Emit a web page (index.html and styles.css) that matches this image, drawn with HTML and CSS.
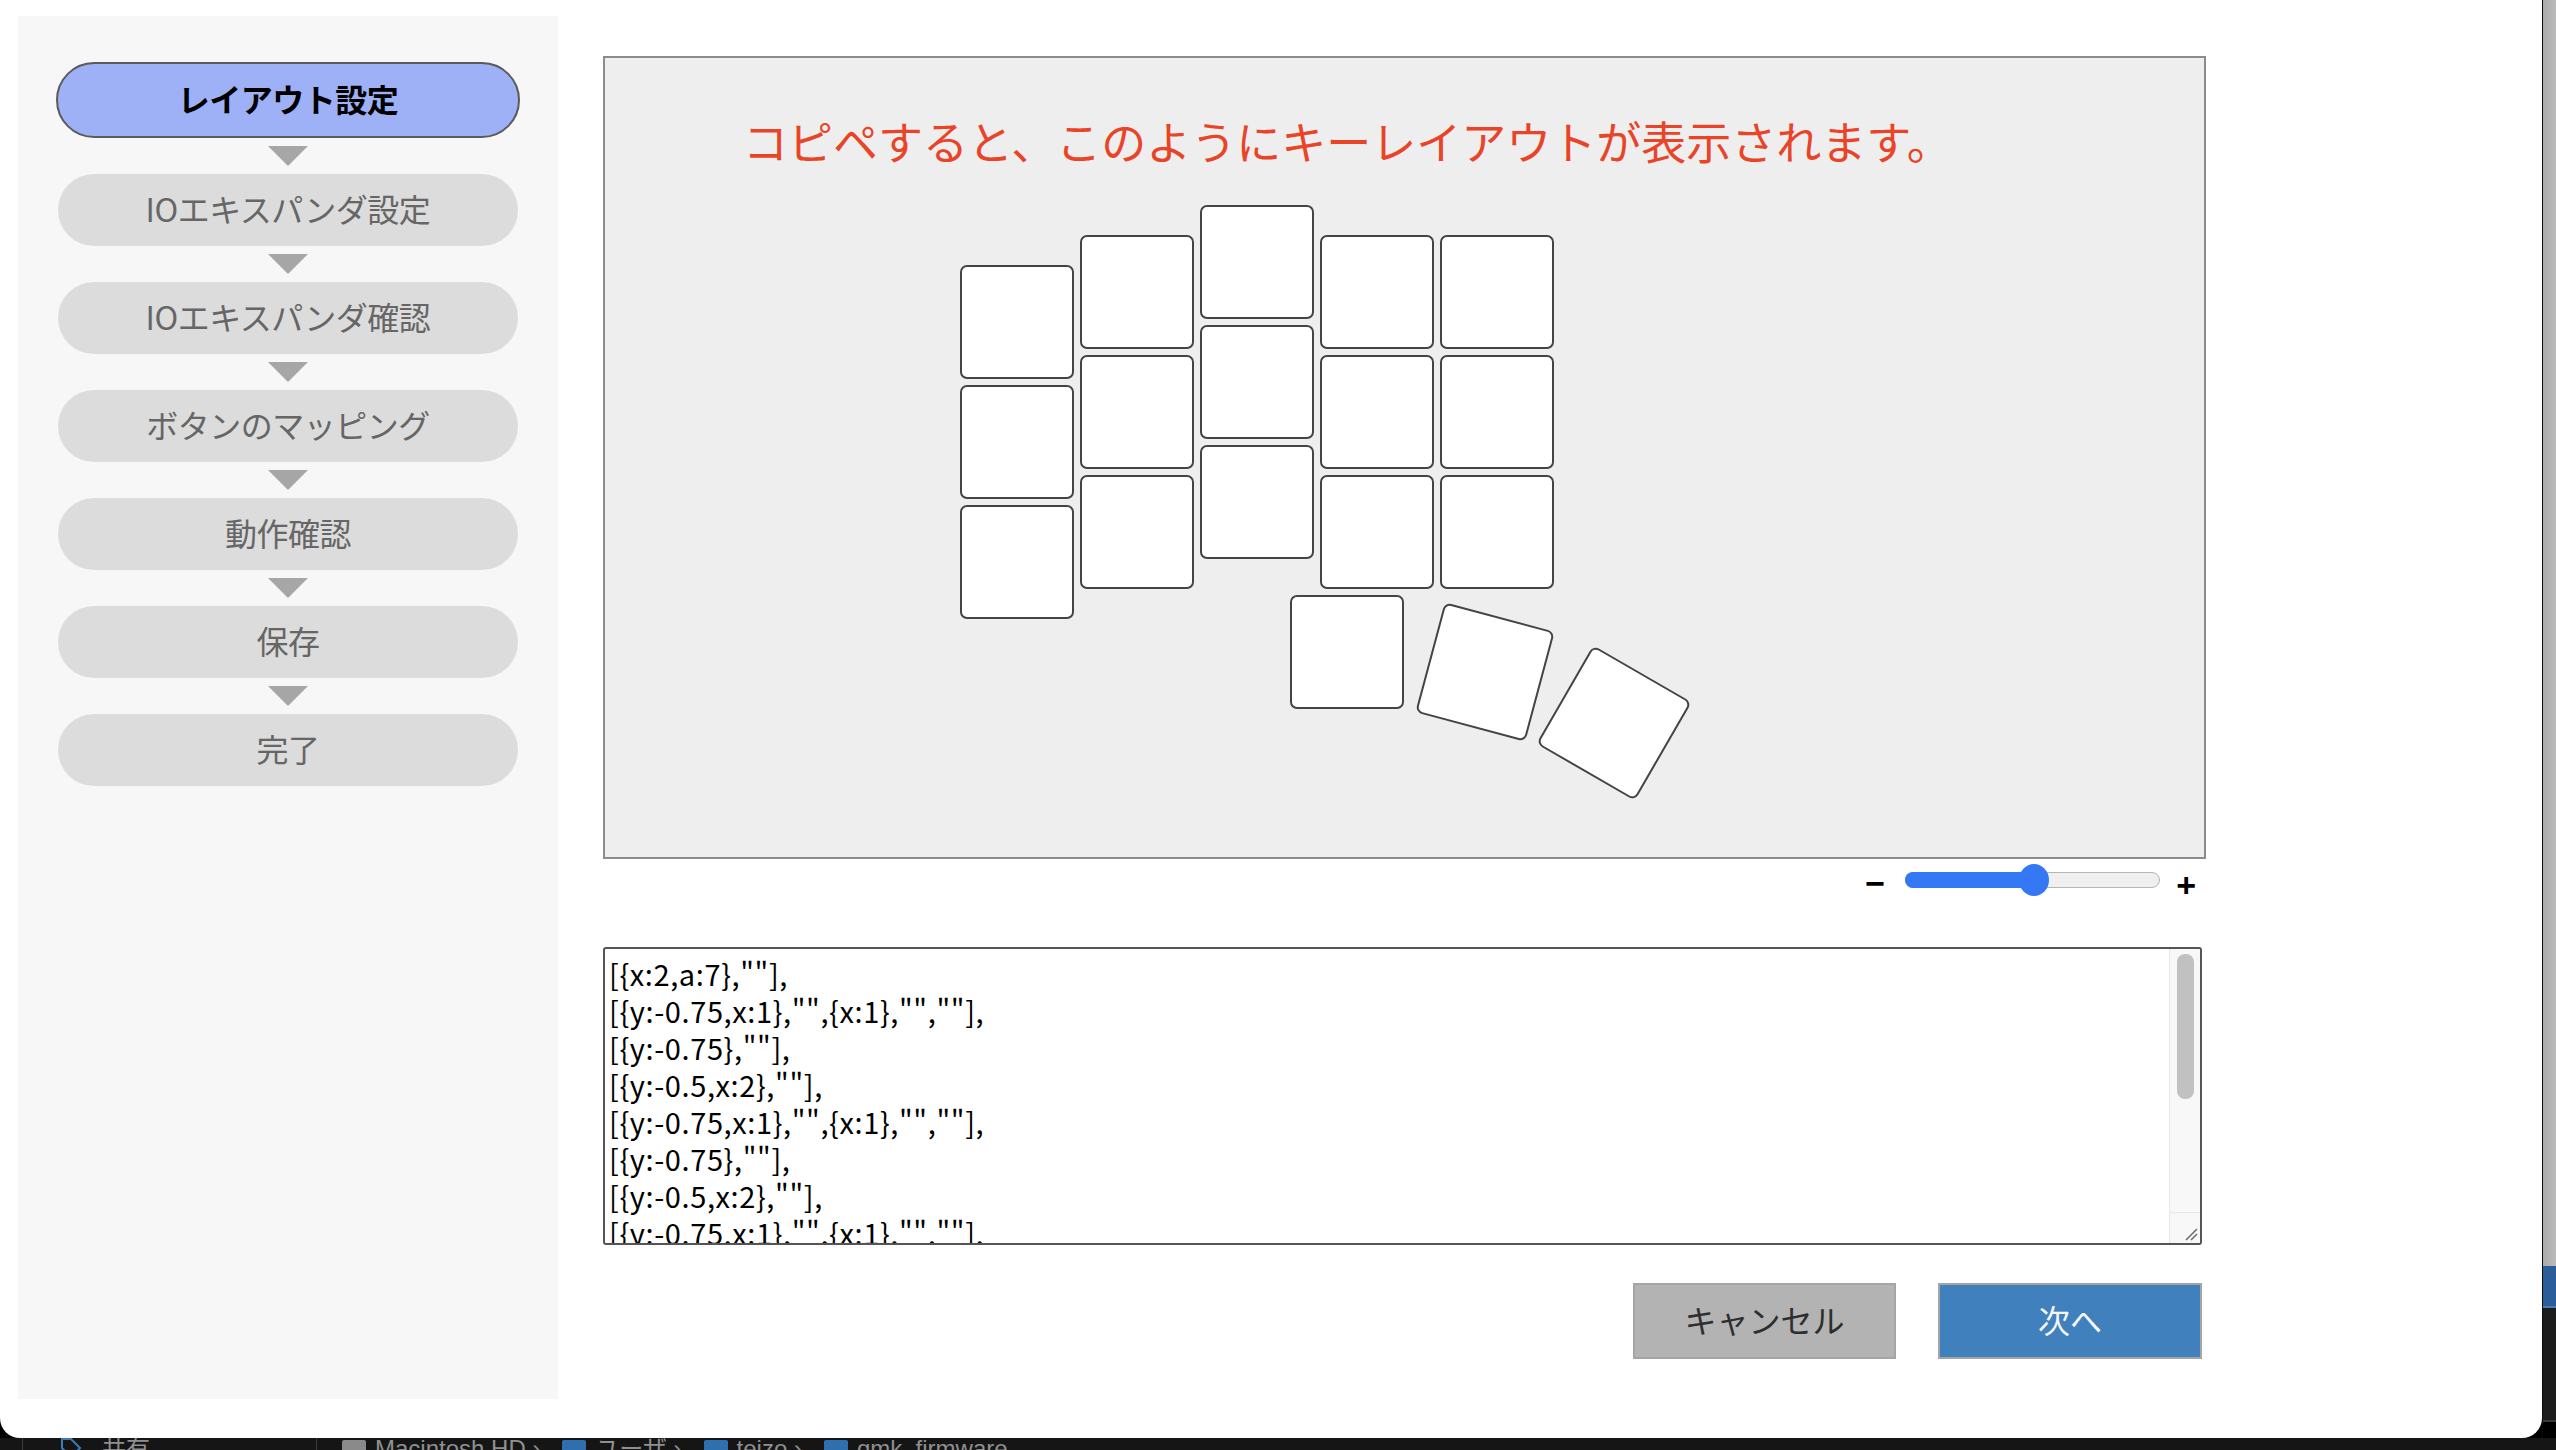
FILE: index.html
```html
<!DOCTYPE html>
<html lang="ja">
<head>
<meta charset="utf-8">
<title>レイアウト設定</title>
<link rel="stylesheet" href="styles.css">
</head>
<body>
<div class="desktop">
  <div class="top-row">
    <div class="window">
      <aside class="sidebar">
        <ol class="steps">
          <li class="step active">レイアウト設定</li>
          <li class="arrow"></li>
          <li class="step">IOエキスパンダ設定</li>
          <li class="arrow"></li>
          <li class="step">IOエキスパンダ確認</li>
          <li class="arrow"></li>
          <li class="step">ボタンのマッピング</li>
          <li class="arrow"></li>
          <li class="step">動作確認</li>
          <li class="arrow"></li>
          <li class="step">保存</li>
          <li class="arrow"></li>
          <li class="step">完了</li>
        </ol>
      </aside>
      <main class="main">
        <div class="preview">
          <p class="caption">コピペすると、このようにキーレイアウトが表示されます。</p>
          <div class="keyboard">
            <div class="key" style="left:0px;top:60px"></div>
            <div class="key" style="left:0px;top:180px"></div>
            <div class="key" style="left:0px;top:300px"></div>
            <div class="key" style="left:120px;top:30px"></div>
            <div class="key" style="left:120px;top:150px"></div>
            <div class="key" style="left:120px;top:270px"></div>
            <div class="key" style="left:240px;top:0px"></div>
            <div class="key" style="left:240px;top:120px"></div>
            <div class="key" style="left:240px;top:240px"></div>
            <div class="key" style="left:360px;top:30px"></div>
            <div class="key" style="left:360px;top:150px"></div>
            <div class="key" style="left:360px;top:270px"></div>
            <div class="key" style="left:480px;top:30px"></div>
            <div class="key" style="left:480px;top:150px"></div>
            <div class="key" style="left:480px;top:270px"></div>
            <div class="key" style="left:330px;top:390px"></div>
            <div class="key" style="left:468px;top:410px;transform:rotate(15deg)"></div>
            <div class="key" style="left:597px;top:461px;transform:rotate(30deg)"></div>
          </div>
        </div>
        <div class="zoom">
          <span class="zoom-minus">−</span>
          <div class="range">
            <div class="range-fill" style="width:128px"></div>
            <div class="range-thumb" style="left:113px"></div>
          </div>
          <span class="zoom-plus">+</span>
        </div>
        <div class="code">
<pre class="code-text">[{x:2,a:7},""],
[{y:-0.75,x:1},"",{x:1},"",""],
[{y:-0.75},""],
[{y:-0.5,x:2},""],
[{y:-0.75,x:1},"",{x:1},"",""],
[{y:-0.75},""],
[{y:-0.5,x:2},""],
[{y:-0.75,x:1},"",{x:1},"",""],
[{y:-0.75},""],
[{y:-0.25,x:2.75},""],
[{r:15,rx:3.75,ry:3.25,y:-0.1,x:0.15},""],
[{r:30,rx:4.75,ry:3.5,y:-0.05,x:0.2},""]</pre>
          <div class="scrollbar">
            <div class="sb-track"><div class="sb-thumb"></div></div>
            <div class="sb-corner">
              <svg class="grip" width="14" height="14" viewBox="0 0 14 14"><path d="M13 2 L2 13 M13 7 L7 13" stroke="#6a6a6a" stroke-width="1.5" fill="none"/></svg>
            </div>
          </div>
        </div>
        <div class="actions">
          <button class="btn cancel">キャンセル</button>
          <button class="btn next">次へ</button>
        </div>
      </main>
    </div>
    <div class="edge">
      <div class="edge-gray"></div>
      <div class="edge-blue"></div>
      <div class="edge-dark"></div>
    </div>
  </div>
  <div class="pathbar">
    <div class="pb-gap"></div>
    <div class="pb-sep"></div>
    <div class="pb-tags">
      <svg class="pb-tag" width="22" height="22" viewBox="0 0 22 22"><path d="M2 2 H11 L20 11 L11 20 L2 11 Z" fill="none" stroke="#3d7ab8" stroke-width="2"/></svg>
      <span>共有</span>
    </div>
    <div class="pb-sep"></div>
    <div class="pb-path">
      <span class="pb-icon gray"></span><span class="pb-crumb">Macintosh HD ›</span>
      <span class="pb-icon"></span><span class="pb-crumb">ユーザ ›</span>
      <span class="pb-icon"></span><span class="pb-crumb">teizo ›</span>
      <span class="pb-icon"></span><span class="pb-crumb">qmk_firmware</span>
    </div>
  </div>
</div>
</body>
</html>
```
FILE: styles.css
```css
* {
  box-sizing: border-box;
  margin: 0;
  padding: 0;
}

html,
body {
  width: 2556px;
  height: 1450px;
  overflow: hidden;
  background: #000;
}

body {
  font-family: "Noto Sans CJK JP", "Noto Sans", sans-serif;
}

.desktop {
  display: flex;
  flex-direction: column;
  width: 2556px;
  height: 1450px;
}

.top-row {
  display: flex;
  height: 1438px;
  flex: none;
}

.window {
  width: 2542px;
  height: 1438px;
  flex: none;
  background: #fff;
  border-radius: 0 0 20px 20px;
  display: flex;
  gap: 45px;
  padding: 16px 0 39px 18px;
}

/* ---------- sidebar ---------- */
.sidebar {
  width: 540px;
  flex: none;
  background: #f7f7f7;
  padding-top: 46px;
}

.steps {
  list-style: none;
  display: flex;
  flex-direction: column;
  align-items: center;
  gap: 8px;
}

.step {
  width: 460px;
  height: 72px;
  border-radius: 36px;
  background: #dcdcdc;
  color: #666;
  font-size: 32px;
  display: flex;
  align-items: center;
  justify-content: center;
  letter-spacing: -0.5px;
  padding-bottom: 5px;
}

.step.active {
  width: 464px;
  height: 76px;
  border-radius: 38px;
  border: 2px solid #5a5a5a;
  background: #9eb0f6;
  color: #000;
  font-weight: 700;
}

.arrow {
  width: 0;
  height: 0;
  border-left: 20px solid transparent;
  border-right: 20px solid transparent;
  border-top: 20px solid #a6a6a6;
}

/* ---------- main ---------- */
.main {
  width: 1603px;
  flex: none;
  padding-top: 40px;
  display: flex;
  flex-direction: column;
}

.preview {
  height: 803px;
  background: #eeeeee;
  border: 2px solid #8c8c8c;
  overflow: hidden;
}

.caption {
  font-size: 45px;
  line-height: 44px;
  color: #e94428;
  margin: 61px 0 0 138px;
  white-space: nowrap;
}

.keyboard {
  position: relative;
  width: 800px;
  height: 620px;
  margin: 42px 0 0 355px;
}

.key {
  position: absolute;
  width: 114px;
  height: 114px;
  background: #fff;
  border: 2px solid #444;
  border-radius: 7px;
}

/* zoom slider */
.zoom {
  display: flex;
  justify-content: flex-end;
  align-items: center;
  height: 32px;
  margin-top: 5px;
  padding-right: 10px;
}

.zoom-minus,
.zoom-plus {
  font-family: "Liberation Sans", Arial, sans-serif;
  font-weight: 700;
  font-size: 34px;
  line-height: 32px;
  color: #000;
}

.zoom-minus {
  margin-right: 20px;
  position: relative;
  top: 3px;
}

.zoom-plus {
  margin-left: 16px;
  position: relative;
  top: 5px;
}

.range {
  position: relative;
  width: 255px;
  height: 16px;
  border-radius: 8px;
  background: #efefef;
  border: 1px solid #b5b5b5;
}

.range-fill {
  position: absolute;
  left: -1px;
  top: -1px;
  height: 16px;
  border-radius: 8px 0 0 8px;
  background: #3478f6;
}

.range-thumb {
  position: absolute;
  top: -9px;
  width: 30px;
  height: 32px;
  border-radius: 50%;
  background: #3478f6;
}

/* code area */
.code {
  width: 1599px;
  height: 298px;
  margin-top: 51px;
  border: 2px solid #555;
  border-radius: 3px;
  display: flex;
  overflow: hidden;
  background: #fff;
}

.code-text {
  flex: 1;
  overflow: hidden;
  padding: 6px 4px 0;
  font-family: "Noto Sans CJK JP", "Noto Sans", sans-serif;
  font-size: 29px;
  line-height: 37px;
  letter-spacing: 0.6px;
  color: #000;
  white-space: pre;
}

.scrollbar {
  width: 31px;
  flex: none;
  display: flex;
  flex-direction: column;
  background: #f8f8f8;
  border-left: 1px solid #e8e8e8;
}

.sb-track {
  flex: 1;
  padding: 5px 6px 0 7px;
}

.sb-thumb {
  height: 145px;
  border-radius: 8px;
  background: #c1c1c1;
}

.sb-corner {
  height: 31px;
  border-top: 1px solid #e8e8e8;
  display: flex;
  justify-content: flex-end;
  align-items: flex-end;
  padding: 0 2px 2px 0;
}

/* buttons */
.actions {
  display: flex;
  justify-content: flex-end;
  gap: 42px;
  margin-top: 38px;
  width: 1599px;
}

.btn {
  width: 264px;
  height: 76px;
  border: 2px solid #a5a5a5;
  font-family: "Noto Sans CJK JP", "Noto Sans", sans-serif;
  font-size: 32px;
  padding-bottom: 5px;
}

.cancel {
  width: 263px;
  background: #b3b3b3;
  color: #2e2e2e;
}

.next {
  background: #4080bd;
  color: #f4f6f8;
}

/* ---------- desktop edges ---------- */
.edge {
  width: 14px;
  flex: none;
  display: flex;
  flex-direction: column;
  border-left: 1px solid #0c0c0c;
}

.edge-gray {
  height: 1266px;
  background: linear-gradient(90deg, #aaaaaa, #bcbcbc);
}

.edge-blue {
  height: 42px;
  background: #2a5d99;
  border-bottom: 2px solid #4f7db3;
}

.edge-dark {
  height: 114px;
  background: #1c1c1c;
  border-bottom: 2px solid #3a3a3a;
}

.pathbar {
  height: 12px;
  flex: none;
  overflow: hidden;
  background: #151515;
  display: flex;
  align-items: flex-start;
  font-family: "Liberation Sans", "Noto Sans CJK JP", sans-serif;
  font-size: 24px;
  line-height: 24px;
  color: #8f8f8f;
}

.pb-gap {
  width: 22px;
}

.pb-sep {
  width: 1px;
  height: 12px;
  background: #3a3a3a;
}

.pb-tags {
  width: 293px;
  display: flex;
  align-items: flex-start;
  gap: 20px;
  padding-left: 37px;
  margin-top: -1px;
}

.pb-path {
  display: flex;
  align-items: flex-start;
  padding-left: 25px;
  margin-top: -1px;
}

.pb-icon {
  width: 24px;
  height: 24px;
  margin-top: 3px;
  background: #2f6fae;
  border-radius: 2px;
  margin-right: 9px;
}

.pb-icon.gray {
  background: #8a8a8a;
}

.pb-crumb {
  margin-right: 22px;
}
```
